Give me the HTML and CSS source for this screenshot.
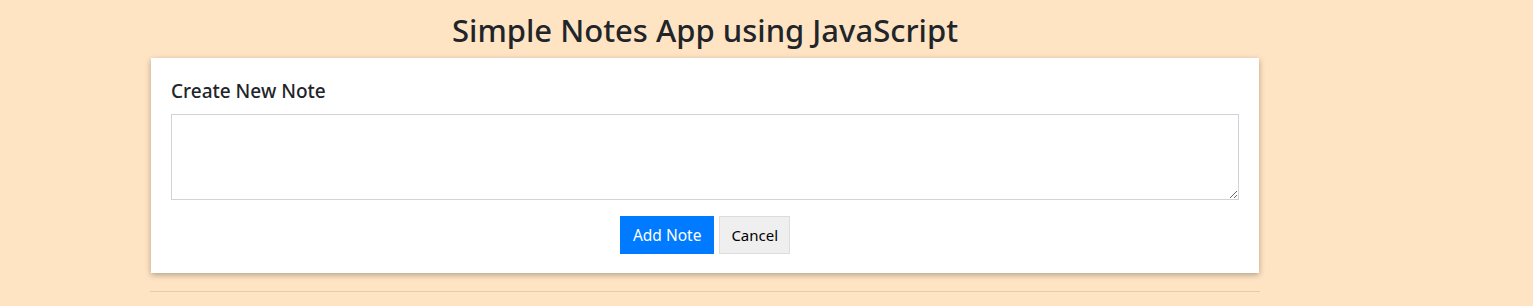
FILE: index.html
```html
<!DOCTYPE html>
<html lang="en">
<head>
  <meta charset="UTF-8">
  <title>Simple Notes App</title>
  <link rel="stylesheet" href="styles.css">
</head>
<body>
  <div class="wrapper">
    <h1>Simple Notes App using JavaScript</h1>

    <div class="card">
      <h2>Create New Note</h2>
      <textarea id="noteText"></textarea>
      <div class="actions">
        <button class="btn btn-primary" id="addBtn">Add Note</button>
        <button class="btn btn-cancel" id="cancelBtn">Cancel</button>
      </div>
    </div>

    <hr>

    <div id="notes"></div>
  </div>

  <script>
    const noteText = document.getElementById("noteText");
    const notes = document.getElementById("notes");

    document.getElementById("addBtn").addEventListener("click", () => {
      if (noteText.value.trim() === "") return;
      const div = document.createElement("div");
      div.className = "note";
      div.textContent = noteText.value;
      notes.appendChild(div);
      noteText.value = "";
    });

    document.getElementById("cancelBtn").addEventListener("click", () => {
      noteText.value = "";
    });
  </script>
</body>
</html>
```

FILE: styles.css
```css
body {
  font-family: "Noto Sans", "Open Sans", sans-serif;
  background: #ffe4c4;
  color: #212529;
  margin: 0;
}

.wrapper {
  width: 1110px;
  margin-left: 150px;
}

h1 {
  margin: 11px 0 9px;
  font-size: 31px;
  font-weight: 500;
  line-height: 38px;
  text-align: center;
}

.card {
  margin: 0 1px;
  padding: 22px 20px 19px;
  background: white;
  box-shadow: 0 2px 6px rgba(0, 0, 0, 0.3);
}

.card h2 {
  margin: 0 0 11px;
  font-size: 19px;
  font-weight: 500;
  line-height: 23px;
}

textarea {
  display: block;
  width: 100%;
  height: 86px;
  box-sizing: border-box;
  border: 1px solid #ced4da;
  margin: 0;
}

.actions {
  display: flex;
  justify-content: center;
  gap: 5px;
  margin-top: 16px;
}

.btn {
  height: 38px;
  padding: 0 12px;
  font-family: inherit;
  font-size: 15px;
  border: 1px solid transparent;
  cursor: pointer;
}

.btn-primary {
  font-size: 15.5px;
  background: #007bff;
  color: white;
}

.btn-cancel {
  padding: 0 11px;
  background: #efefef;
  border-color: #dcdcdc;
  color: black;
}

hr {
  margin: 18px 0 0;
  border: 0;
  border-top: 1px solid rgba(0, 0, 0, 0.1);
}
```
